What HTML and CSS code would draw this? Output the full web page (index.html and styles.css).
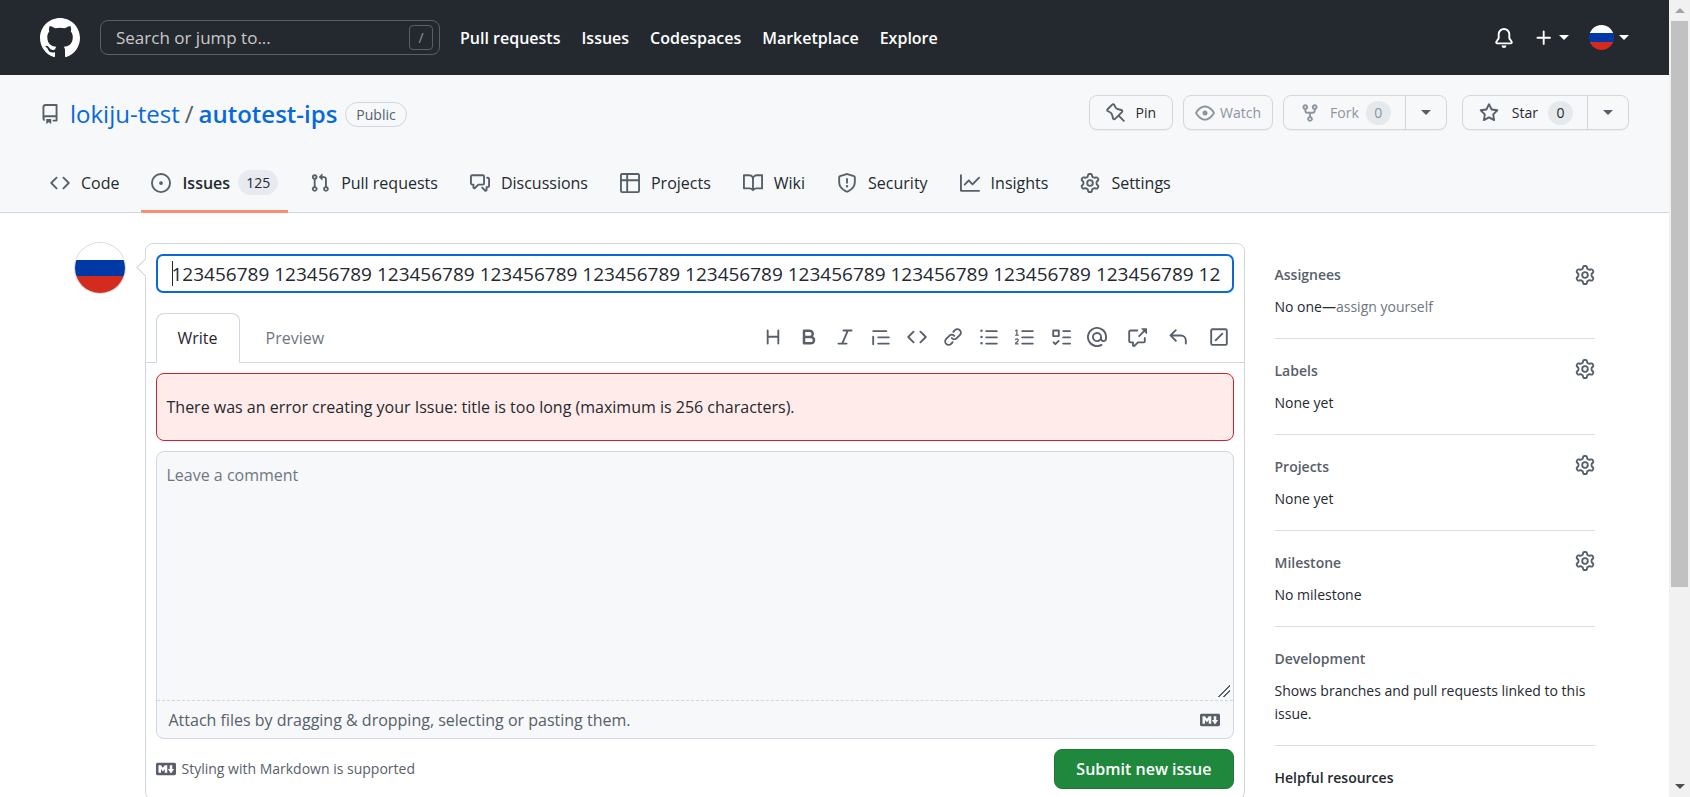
FILE: index.html
```html
<!DOCTYPE html>
<html lang="en">
<head>
<meta charset="utf-8">
<title>New Issue · lokiju-test/autotest-ips</title>
<link rel="stylesheet" href="styles.css">
</head>
<body>
<svg class="sprite" aria-hidden="true">
<symbol id="i-mark" viewBox="0 0 16 16"><path d="M8 0C3.58 0 0 3.58 0 8c0 3.54 2.29 6.53 5.47 7.59.4.07.55-.17.55-.38 0-.19-.01-.82-.01-1.49-2.01.37-2.53-.49-2.69-.94-.09-.23-.48-.94-.82-1.13-.28-.15-.68-.52-.01-.53.63-.01 1.08.58 1.23.82.72 1.21 1.87.87 2.33.66.07-.52.28-.87.51-1.07-1.78-.2-3.64-.89-3.64-3.95 0-.87.31-1.59.82-2.15-.08-.2-.36-1.02.08-2.12 0 0 .67-.21 2.2.82.64-.18 1.32-.27 2-.27.68 0 1.36.09 2 .27 1.53-1.04 2.2-.82 2.2-.82.44 1.1.16 1.92.08 2.12.51.56.82 1.27.82 2.15 0 3.07-1.87 3.75-3.65 3.95.29.25.54.73.54 1.48 0 1.07-.01 1.93-.01 2.2 0 .21.15.46.55.38A8.013 8.013 0 0016 8c0-4.42-3.58-8-8-8z"/></symbol>
<symbol id="i-repo" viewBox="0 0 16 16"><path d="M2 2.5A2.5 2.5 0 014.5 0h8.75a.75.75 0 01.75.75v12.5a.75.75 0 01-.75.75h-2.5a.75.75 0 110-1.5h1.75v-2h-8a1 1 0 00-.714 1.7.75.75 0 01-1.072 1.05A2.495 2.495 0 012 11.5v-9zm10.5-1V9h-8c-.356 0-.694.074-1 .208V2.5a1 1 0 011-1h8zM5 12.25v3.25a.25.25 0 00.4.2l1.45-1.087a.25.25 0 01.3 0L8.6 15.7a.25.25 0 00.4-.2v-3.25a.25.25 0 00-.25-.25h-3.5a.25.25 0 00-.25.25z"/></symbol>
<symbol id="i-code" viewBox="0 0 16 16"><path d="M4.72 3.22a.75.75 0 011.06 1.06L2.06 8l3.72 3.72a.75.75 0 11-1.06 1.06L.47 8.53a.75.75 0 010-1.06l4.25-4.25zm6.56 0a.75.75 0 10-1.06 1.06L13.94 8l-3.72 3.72a.75.75 0 101.06 1.06l4.25-4.25a.75.75 0 000-1.06l-4.25-4.25z"/></symbol>
<symbol id="i-issue" viewBox="0 0 16 16"><path d="M8 9.5a1.5 1.5 0 100-3 1.5 1.5 0 000 3z"/><path d="M8 0a8 8 0 100 16A8 8 0 008 0zM1.5 8a6.5 6.5 0 1113 0 6.5 6.5 0 01-13 0z"/></symbol>
<symbol id="i-pr" viewBox="0 0 16 16"><path d="M7.177 3.073L9.573.677A.25.25 0 0110 .854v4.792a.25.25 0 01-.427.177L7.177 3.427a.25.25 0 010-.354zM3.75 2.5a.75.75 0 100 1.5.75.75 0 000-1.5zm-2.25.75a2.25 2.25 0 113 2.122v5.256a2.251 2.251 0 11-1.5 0V5.372A2.25 2.25 0 011.5 3.25zM11 2.5h-1V4h1a1 1 0 011 1v5.628a2.251 2.251 0 101.5 0V5A2.5 2.5 0 0011 2.5zm1 10.25a.75.75 0 111.5 0 .75.75 0 01-1.5 0zM3.75 12a.75.75 0 100 1.5.75.75 0 000-1.5z"/></symbol>
<symbol id="i-disc" viewBox="0 0 16 16"><path d="M1.5 2.75a.25.25 0 01.25-.25h8.5a.25.25 0 01.25.25v5.5a.25.25 0 01-.25.25h-3.5a.75.75 0 00-.53.22L3.5 11.44V9.25a.75.75 0 00-.75-.75h-1a.25.25 0 01-.25-.25v-5.5zM1.75 1A1.75 1.75 0 000 2.75v5.5C0 9.216.784 10 1.75 10H2v1.543a1.457 1.457 0 002.487 1.03L7.061 10h3.189A1.75 1.75 0 0012 8.25v-5.5A1.75 1.75 0 0010.25 1h-8.5zM14.5 4.75a.25.25 0 00-.25-.25h-.5a.75.75 0 110-1.5h.5c.966 0 1.75.784 1.75 1.75v5.5A1.75 1.75 0 0114.25 12H14v1.543a1.457 1.457 0 01-2.487 1.03L9.22 12.28a.75.75 0 111.06-1.06l2.22 2.22v-2.19a.75.75 0 01.75-.75h1a.25.25 0 00.25-.25v-5.5z"/></symbol>
<symbol id="i-table" viewBox="0 0 16 16"><path d="M0 1.75C0 .784.784 0 1.75 0h12.5C15.216 0 16 .784 16 1.75v12.5A1.75 1.75 0 0114.25 16H1.75A1.75 1.75 0 010 14.25V1.75zM1.5 6.5v7.75c0 .138.112.25.25.25H5v-8H1.5zM5 5H1.5V1.75a.25.25 0 01.25-.25H5V5zm1.5 1.5v8h7.75a.25.25 0 00.25-.25V6.5h-8zm8-1.5h-8V1.5h7.75a.25.25 0 01.25.25V5z"/></symbol>
<symbol id="i-book" viewBox="0 0 16 16"><path d="M0 1.75A.75.75 0 01.75 1h4.253c1.227 0 2.317.59 3 1.501A3.744 3.744 0 0111.006 1h4.245a.75.75 0 01.75.75v10.5a.75.75 0 01-.75.75h-4.507a2.25 2.25 0 00-1.591.659l-.622.621a.75.75 0 01-1.06 0l-.622-.621A2.25 2.25 0 005.258 13H.75a.75.75 0 01-.75-.75V1.75zm8.755 3a2.25 2.25 0 012.25-2.25H14.5v9h-3.757c-.71 0-1.4.201-1.992.572l.004-7.322zm-1.504 7.324l.004-5.073-.002-2.253A2.25 2.25 0 005.003 2.5H1.5v9h3.757a3.75 3.75 0 011.994.574z"/></symbol>
<symbol id="i-shield" viewBox="0 0 16 16"><path d="M7.467.133a1.75 1.75 0 011.066 0l5.25 1.68A1.75 1.75 0 0115 3.48V7c0 1.566-.32 3.182-1.303 4.682-.983 1.498-2.585 2.813-5.032 3.855a1.7 1.7 0 01-1.33 0c-2.447-1.042-4.049-2.357-5.032-3.855C1.32 10.182 1 8.566 1 7V3.48a1.75 1.75 0 011.217-1.667l5.25-1.68zm.61 1.429a.25.25 0 00-.153 0l-5.25 1.68a.25.25 0 00-.174.238V7c0 1.358.275 2.666 1.057 3.86.784 1.194 2.121 2.34 4.366 3.297a.2.2 0 00.154 0c2.245-.956 3.582-2.104 4.366-3.298C13.225 9.666 13.5 8.36 13.5 7V3.48a.25.25 0 00-.174-.237l-5.25-1.68zM9 10.5a1 1 0 11-2 0 1 1 0 012 0zm-.25-5.75a.75.75 0 10-1.5 0v3a.75.75 0 001.5 0v-3z"/></symbol>
<symbol id="i-graph" viewBox="0 0 16 16"><path d="M1.5 1.75a.75.75 0 00-1.5 0v12.5c0 .414.336.75.75.75h14.5a.75.75 0 000-1.5H1.5V1.75zm14.28 2.53a.75.75 0 00-1.06-1.06L10 7.94 7.53 5.47a.75.75 0 00-1.06 0L3.22 8.72a.75.75 0 001.06 1.06L7 7.06l2.47 2.47a.75.75 0 001.06 0l5.25-5.25z"/></symbol>
<symbol id="i-gear" viewBox="0 0 16 16"><path d="M8 0a8.2 8.2 0 0 1 .701.031C9.444.095 9.99.645 10.16 1.29l.288 1.107c.018.066.079.158.212.224.231.114.454.243.668.386.123.082.233.09.299.071l1.103-.303c.644-.176 1.392.021 1.82.63.27.385.506.792.704 1.218.315.675.111 1.422-.364 1.891l-.814.806c-.049.048-.098.147-.088.294.016.257.016.515 0 .772-.01.147.038.246.088.294l.814.806c.475.469.679 1.216.364 1.891a7.977 7.977 0 0 1-.704 1.217c-.428.61-1.176.807-1.82.63l-1.102-.302c-.067-.019-.177-.011-.3.071a5.909 5.909 0 0 1-.668.386c-.133.066-.194.158-.211.224l-.29 1.106c-.168.646-.715 1.196-1.458 1.26a8.006 8.006 0 0 1-1.402 0c-.743-.064-1.289-.614-1.458-1.26l-.289-1.106c-.018-.066-.079-.158-.212-.224a5.738 5.738 0 0 1-.668-.386c-.123-.082-.233-.09-.299-.071l-1.103.303c-.644.176-1.392-.021-1.82-.63a8.12 8.12 0 0 1-.704-1.218c-.315-.675-.111-1.422.363-1.891l.815-.806c.05-.048.098-.147.088-.294a6.214 6.214 0 0 1 0-.772c.01-.147-.038-.246-.088-.294l-.815-.806C.635 6.045.431 5.298.746 4.623a7.92 7.92 0 0 1 .704-1.217c.428-.61 1.176-.807 1.82-.63l1.102.302c.067.019.177.011.3-.071.214-.143.437-.272.668-.386.133-.066.194-.158.211-.224l.29-1.106C6.009.645 6.556.095 7.299.03 7.53.01 7.764 0 8 0Zm-.571 1.525c-.036.003-.108.036-.137.146l-.289 1.105c-.147.561-.549.967-.998 1.189-.173.086-.34.183-.5.29-.417.278-.97.423-1.529.27l-1.103-.303c-.109-.03-.175.016-.195.045-.22.312-.412.644-.573.99-.014.031-.021.11.059.19l.815.806c.411.406.562.957.53 1.456a4.709 4.709 0 0 0 0 .582c.032.499-.119 1.05-.53 1.456l-.815.806c-.081.08-.073.159-.059.19.162.346.353.677.573.989.02.03.085.076.195.046l1.102-.303c.56-.153 1.113-.008 1.53.27.161.107.328.204.501.29.447.222.85.629.997 1.189l.289 1.105c.029.109.101.143.137.146a6.6 6.6 0 0 0 1.142 0c.036-.003.108-.036.137-.146l.289-1.105c.147-.561.549-.967.998-1.189.173-.086.34-.183.5-.29.417-.278.97-.423 1.529-.27l1.103.303c.109.029.175-.016.195-.045.22-.313.411-.644.573-.99.014-.031.021-.11-.059-.19l-.815-.806c-.411-.406-.562-.957-.53-1.456a4.709 4.709 0 0 0 0-.582c-.032-.499.119-1.05.53-1.456l.815-.806c.081-.08.073-.159.059-.19a6.464 6.464 0 0 0-.573-.989c-.02-.03-.085-.076-.195-.046l-1.102.303c-.56.153-1.113.008-1.53-.27a4.44 4.44 0 0 0-.501-.29c-.447-.222-.85-.629-.997-1.189l-.289-1.105c-.029-.11-.101-.143-.137-.146a6.6 6.6 0 0 0-1.142 0ZM11 8a3 3 0 1 1-6 0 3 3 0 0 1 6 0ZM9.5 8a1.5 1.5 0 1 0-3.001.001A1.5 1.5 0 0 0 9.5 8Z"/></symbol>
<symbol id="i-bell" viewBox="0 0 16 16"><path d="M8 16a2 2 0 001.985-1.75c.017-.137-.097-.25-.235-.25h-3.5c-.138 0-.252.113-.235.25A2 2 0 008 16z"/><path d="M8 1.5A3.5 3.5 0 004.5 5v2.947c0 .346-.102.683-.294.97l-1.703 2.556a.018.018 0 00-.003.01l.001.006c0 .002.002.004.004.006a.017.017 0 00.006.004l.007.001h10.964l.007-.001a.016.016 0 00.006-.004.016.016 0 00.004-.006l.001-.007a.017.017 0 00-.003-.01l-1.703-2.554a1.75 1.75 0 01-.294-.97V5A3.5 3.5 0 008 1.5zM3 5a5 5 0 0110 0v2.947c0 .05.015.098.042.139l1.703 2.555A1.518 1.518 0 0113.482 13H2.518a1.518 1.518 0 01-1.263-2.36l1.703-2.554A.25.25 0 003 7.947V5z"/></symbol>
<symbol id="i-plus" viewBox="0 0 16 16"><path d="M7.75 2a.75.75 0 01.75.75V7h4.25a.75.75 0 110 1.5H8.5v4.25a.75.75 0 11-1.5 0V8.5H2.75a.75.75 0 010-1.5H7V2.75A.75.75 0 017.75 2z"/></symbol>
<symbol id="i-pin" viewBox="0 0 16 16"><path d="M4.456.734a1.75 1.75 0 012.826.504l.613 1.327a3.081 3.081 0 002.084 1.707l2.454.584c1.332.317 1.8 1.972.832 2.94L11.06 10l3.72 3.72a.75.75 0 11-1.061 1.06L10 11.06l-2.204 2.205c-.968.968-2.623.5-2.94-.832l-.584-2.454a3.081 3.081 0 00-1.707-2.084l-1.327-.613a1.75 1.75 0 01-.504-2.826L4.456.734zM5.92 1.866a.25.25 0 00-.404-.072L1.794 5.516a.25.25 0 00.072.404l1.328.613A4.582 4.582 0 015.73 9.63l.584 2.454a.25.25 0 00.42.12l5.47-5.47a.25.25 0 00-.12-.42L9.63 5.73a4.581 4.581 0 01-3.098-2.537L5.92 1.866z"/></symbol>
<symbol id="i-eye" viewBox="0 0 16 16"><path d="M1.679 7.932c.412-.621 1.242-1.75 2.366-2.717C5.175 4.242 6.527 3.5 8 3.5c1.473 0 2.824.742 3.955 1.715 1.124.967 1.954 2.096 2.366 2.717a.119.119 0 010 .136c-.412.621-1.242 1.75-2.366 2.717C10.825 11.758 9.473 12.5 8 12.5c-1.473 0-2.824-.742-3.955-1.715C2.92 9.818 2.09 8.69 1.679 8.068a.119.119 0 010-.136zM8 2c-1.981 0-3.67.992-4.933 2.078C1.797 5.169.88 6.423.43 7.1a1.619 1.619 0 000 1.798c.45.678 1.367 1.932 2.637 3.024C4.329 13.008 6.019 14 8 14c1.981 0 3.67-.992 4.933-2.078 1.27-1.091 2.187-2.345 2.637-3.023a1.619 1.619 0 000-1.798c-.45-.678-1.367-1.932-2.637-3.023C11.671 2.992 9.981 2 8 2zm0 8a2 2 0 100-4 2 2 0 000 4z"/></symbol>
<symbol id="i-fork" viewBox="0 0 16 16"><path d="M5 3.25a.75.75 0 11-1.5 0 .75.75 0 011.5 0zm0 2.122a2.25 2.25 0 10-1.5 0v.878A2.25 2.25 0 005.75 8.5h1.5v2.128a2.251 2.251 0 101.5 0V8.5h1.5a2.25 2.25 0 002.25-2.25v-.878a2.25 2.25 0 10-1.5 0v.878a.75.75 0 01-.75.75h-4.5A.75.75 0 015 6.25v-.878zm3.75 7.378a.75.75 0 11-1.5 0 .75.75 0 011.5 0zm3-8.75a.75.75 0 100-1.5.75.75 0 000 1.5z"/></symbol>
<symbol id="i-star" viewBox="0 0 16 16"><path d="M8 .25a.75.75 0 01.673.418l1.882 3.815 4.21.612a.75.75 0 01.416 1.279l-3.046 2.97.719 4.192a.75.75 0 01-1.088.791L8 12.347l-3.766 1.98a.75.75 0 01-1.088-.79l.72-4.194L.818 6.374a.75.75 0 01.416-1.28l4.21-.611L7.327.668A.75.75 0 018 .25zm0 2.445L6.615 5.5a.75.75 0 01-.564.41l-3.097.45 2.24 2.184a.75.75 0 01.216.664l-.528 3.084 2.769-1.456a.75.75 0 01.698 0l2.77 1.456-.53-3.084a.75.75 0 01.216-.664l2.24-2.183-3.096-.45a.75.75 0 01-.564-.41L8 2.694v.001z"/></symbol>
<symbol id="i-heading" viewBox="0 0 16 16"><path d="M3.75 2a.75.75 0 01.75.75V7h7V2.75a.75.75 0 011.5 0v10.5a.75.75 0 01-1.5 0V8.5h-7v4.75a.75.75 0 01-1.5 0V2.75A.75.75 0 013.75 2z"/></symbol>
<symbol id="i-bold" viewBox="0 0 16 16"><path d="M4 2a1 1 0 00-1 1v10a1 1 0 001 1h5.5a3.5 3.5 0 001.852-6.47A3.5 3.5 0 008.5 2H4zm4.5 5a1.5 1.5 0 100-3H5v3h3.5zM5 9v3h4.5a1.5 1.5 0 000-3H5z"/></symbol>
<symbol id="i-italic" viewBox="0 0 16 16"><path d="M6 2.75A.75.75 0 016.75 2h6.5a.75.75 0 010 1.5h-2.505l-3.858 9H9.25a.75.75 0 010 1.5h-6.5a.75.75 0 010-1.5h2.505l3.858-9H6.75A.75.75 0 016 2.75z"/></symbol>
<symbol id="i-quote" viewBox="0 0 16 16"><path d="M1.75 2.5a.75.75 0 000 1.5h10.5a.75.75 0 000-1.5H1.75zm4 5a.75.75 0 000 1.5h8.5a.75.75 0 000-1.5h-8.5zm0 5a.75.75 0 000 1.5h8.5a.75.75 0 000-1.5h-8.5zM2.5 7.75a.75.75 0 00-1.5 0v6a.75.75 0 001.5 0v-6z"/></symbol>
<symbol id="i-link" viewBox="0 0 16 16"><path d="M7.775 3.275a.75.75 0 001.06 1.06l1.25-1.25a2 2 0 112.83 2.83l-2.5 2.5a2 2 0 01-2.83 0 .75.75 0 00-1.06 1.06 3.5 3.5 0 004.95 0l2.5-2.5a3.5 3.5 0 00-4.95-4.95l-1.25 1.25zm-4.69 9.64a2 2 0 010-2.83l2.5-2.5a2 2 0 012.83 0 .75.75 0 001.06-1.06 3.5 3.5 0 00-4.95 0l-2.5 2.5a3.5 3.5 0 004.95 4.95l1.25-1.25a.75.75 0 00-1.06-1.06l-1.25 1.25a2 2 0 01-2.83 0z"/></symbol>
<symbol id="i-ul" viewBox="0 0 16 16"><path d="M2 4a1 1 0 100-2 1 1 0 000 2zm3.75-1.5a.75.75 0 000 1.5h8.5a.75.75 0 000-1.5h-8.5zm0 5a.75.75 0 000 1.5h8.5a.75.75 0 000-1.5h-8.5zm0 5a.75.75 0 000 1.5h8.5a.75.75 0 000-1.5h-8.5zM3 8a1 1 0 11-2 0 1 1 0 012 0zm-1 6a1 1 0 100-2 1 1 0 000 2z"/></symbol>
<symbol id="i-ol" viewBox="0 0 16 16"><path d="M2.003 2.5a.5.5 0 00-.723-.447l-1.003.5a.5.5 0 00.446.895l.28-.14V6H.5a.5.5 0 000 1h2.006a.5.5 0 100-1h-.503V2.5zM5 3.25a.75.75 0 01.75-.75h8.5a.75.75 0 010 1.5h-8.5A.75.75 0 015 3.25zm0 5a.75.75 0 01.75-.75h8.5a.75.75 0 010 1.5h-8.5A.75.75 0 015 8.25zm0 5a.75.75 0 01.75-.75h8.5a.75.75 0 010 1.5h-8.5a.75.75 0 01-.75-.75zM.924 10.32l.003-.004a.851.851 0 01.144-.153A.66.66 0 011.5 10c.195 0 .306.068.374.146a.57.57 0 01.128.376c0 .453-.269.682-.8 1.078l-.035.025C.692 11.98 0 12.495 0 13.5a.5.5 0 00.5.5h2.003a.5.5 0 000-1H1.146c.132-.197.351-.372.654-.597l.047-.035c.47-.35 1.156-.858 1.156-1.845 0-.365-.118-.744-.377-1.038-.268-.303-.658-.484-1.126-.484-.48 0-.84.202-1.068.392a1.858 1.858 0 00-.348.384l-.007.011a.5.5 0 00.847.531z"/></symbol>
<symbol id="i-task" viewBox="0 0 16 16"><path d="M2 2h4a1 1 0 011 1v4a1 1 0 01-1 1H2a1 1 0 01-1-1V3a1 1 0 011-1zm4.655 8.595a.75.75 0 010 1.06L4.03 14.28a.75.75 0 01-1.06 0l-1.5-1.5a.75.75 0 011.06-1.06l.97.97 2.095-2.095a.75.75 0 011.06 0zM9.75 2.5h5.5a.75.75 0 010 1.5h-5.5a.75.75 0 010-1.5zm0 5h5.5a.75.75 0 010 1.5h-5.5a.75.75 0 010-1.5zm0 5h5.5a.75.75 0 010 1.5h-5.5a.75.75 0 010-1.5zm-7.25-9v3h3v-3z"/></symbol>
<symbol id="i-at" viewBox="0 0 16 16"><path d="M4.75 2.37a6.5 6.5 0 006.5 11.26.75.75 0 01.75 1.298 8 8 0 113.994-7.273.754.754 0 01.006.095v1.5a2.75 2.75 0 01-5.072 1.475A4 4 0 1112 8v1.25a1.25 1.25 0 002.5 0V7.867a6.5 6.5 0 00-9.75-5.496V2.37zM10.5 8a2.5 2.5 0 10-5 0 2.5 2.5 0 005 0z"/></symbol>
<symbol id="i-cross" viewBox="0 0 16 16"><path d="M16 1.25v4.146a.25.25 0 01-.427.177L14.03 4.03l-3.75 3.75a.75.75 0 11-1.06-1.06l3.75-3.75-1.543-1.543A.25.25 0 0111.604 1h4.146a.25.25 0 01.25.25zM2.75 3.5a.25.25 0 00-.25.25v7.5c0 .138.112.25.25.25h2a.75.75 0 01.75.75v2.19l2.72-2.72a.75.75 0 01.53-.22h4.5a.25.25 0 00.25-.25v-2.5a.75.75 0 111.5 0v2.5A1.75 1.75 0 0113.25 13H9.06l-2.573 2.573A1.457 1.457 0 014 14.543V13H2.75A1.75 1.75 0 011 11.25v-7.5C1 2.784 1.784 2 2.75 2h5.5a.75.75 0 010 1.5h-5.5z"/></symbol>
<symbol id="i-reply" viewBox="0 0 16 16"><path d="M6.78 1.97a.75.75 0 010 1.06L3.81 6h6.44A4.75 4.75 0 0115 10.75v2.5a.75.75 0 01-1.5 0v-2.5a3.25 3.25 0 00-3.25-3.25H3.81l2.97 2.97a.75.75 0 11-1.06 1.06L1.47 7.28a.75.75 0 010-1.06l4.25-4.25a.75.75 0 011.06 0z"/></symbol>
<symbol id="i-slash" viewBox="0 0 16 16"><g fill="none" stroke="currentColor" stroke-width="1.5" stroke-linecap="round"><rect x="1.75" y="1.75" width="12.5" height="12.5" rx="1"/><path d="M5.3 10.7l5.4-5.4"/></g></symbol>
<symbol id="i-md" viewBox="0 0 16 16"><path d="M14.85 3H1.15C.52 3 0 3.52 0 4.15v7.69C0 12.48.52 13 1.15 13h13.69c.64 0 1.15-.52 1.15-1.15v-7.7C16 3.52 15.48 3 14.85 3zM9 11H7V8L5.5 9.92 4 8v3H2V5h2l1.5 2L7 5h2v6zm2.99.5L9.5 8H11V5h2v3h1.5l-2.51 3.5z"/></symbol>
</svg>
<div class="window">
<div class="page">
<header class="topbar">
  <a class="mark" href="#" aria-label="Homepage"><svg class="mark-icon"><use href="#i-mark"/></svg></a>
  <div class="search">
    <input class="search-input" type="text" placeholder="Search or jump to..." aria-label="Search or jump to">
    <kbd class="search-key">/</kbd>
  </div>
  <nav class="topnav">
    <a href="#">Pull requests</a><a href="#">Issues</a><a href="#">Codespaces</a><a href="#">Marketplace</a><a href="#">Explore</a>
  </nav>
  <div class="top-actions">
    <a class="bell" href="#" aria-label="Notifications"><svg class="icon"><use href="#i-bell"/></svg></a>
    <button class="top-menu" type="button" aria-label="Create new"><svg class="icon"><use href="#i-plus"/></svg><span class="caret"></span></button>
    <button class="top-menu account" type="button" aria-label="Account menu"><span class="flag flag-small"></span><span class="caret"></span></button>
  </div>
</header>

<div class="repo-head">
  <div class="repo-row">
    <div class="repo-title">
      <svg class="icon"><use href="#i-repo"/></svg>
      <a class="owner" href="#">lokiju-test</a><span class="sep">/</span><a class="name" href="#">autotest-ips</a>
      <span class="visibility">Public</span>
    </div>
    <div class="repo-actions">
      <button class="btn btn-pin" type="button"><svg class="icon"><use href="#i-pin"/></svg>Pin</button>
      <button class="btn btn-watch" type="button" disabled><svg class="icon"><use href="#i-eye"/></svg>Watch</button>
      <div class="split">
        <button class="btn btn-main" type="button" disabled><svg class="icon"><use href="#i-fork"/></svg>Fork<span class="count">0</span></button><button class="btn btn-drop" type="button" aria-label="Fork options"><span class="caret"></span></button>
      </div>
      <div class="split split-star">
        <button class="btn btn-main" type="button"><svg class="icon"><use href="#i-star"/></svg>Star<span class="count">0</span></button><button class="btn btn-drop" type="button" aria-label="Star options"><span class="caret"></span></button>
      </div>
    </div>
  </div>
  <nav class="tabs">
    <a class="tab" href="#"><svg class="icon"><use href="#i-code"/></svg>Code</a>
    <a class="tab tab-current" href="#"><svg class="icon"><use href="#i-issue"/></svg>Issues<span class="tab-count">125</span></a>
    <a class="tab" href="#"><svg class="icon"><use href="#i-pr"/></svg>Pull requests</a>
    <a class="tab" href="#"><svg class="icon"><use href="#i-disc"/></svg>Discussions</a>
    <a class="tab" href="#"><svg class="icon"><use href="#i-table"/></svg>Projects</a>
    <a class="tab" href="#"><svg class="icon"><use href="#i-book"/></svg>Wiki</a>
    <a class="tab" href="#"><svg class="icon"><use href="#i-shield"/></svg>Security</a>
    <a class="tab" href="#"><svg class="icon"><use href="#i-graph"/></svg>Insights</a>
    <a class="tab" href="#"><svg class="icon"><use href="#i-gear"/></svg>Settings</a>
  </nav>
</div>

<main class="main">
  <span class="flag flag-large"></span>
  <form class="composer">
    <div class="title-field">
      <input class="title-input" type="text" aria-label="Title" value="123456789 123456789 123456789 123456789 123456789 123456789 123456789 123456789 123456789 123456789 123456789 123456789 123456789 123456789 123456789 123456789 123456789 123456789 123456789 123456789 123456789 123456789 123456789 123456789 123456789 123456789">
    </div>
    <div class="editor-head">
      <div class="editor-tabs">
        <button class="editor-tab editor-tab-current" type="button">Write</button>
        <button class="editor-tab" type="button">Preview</button>
      </div>
      <div class="toolbar">
        <div class="tools">
          <button type="button" aria-label="Heading"><svg class="icon"><use href="#i-heading"/></svg></button>
          <button type="button" aria-label="Bold"><svg class="icon"><use href="#i-bold"/></svg></button>
          <button type="button" aria-label="Italic"><svg class="icon"><use href="#i-italic"/></svg></button>
          <button type="button" aria-label="Quote"><svg class="icon"><use href="#i-quote"/></svg></button>
          <button type="button" aria-label="Code"><svg class="icon"><use href="#i-code"/></svg></button>
          <button type="button" aria-label="Link"><svg class="icon"><use href="#i-link"/></svg></button>
          <button type="button" aria-label="Bulleted list"><svg class="icon"><use href="#i-ul"/></svg></button>
          <button type="button" aria-label="Numbered list"><svg class="icon"><use href="#i-ol"/></svg></button>
          <button type="button" aria-label="Task list"><svg class="icon"><use href="#i-task"/></svg></button>
          <button type="button" aria-label="Mention"><svg class="icon"><use href="#i-at"/></svg></button>
        </div>
        <div class="tools tools-wide">
          <button type="button" aria-label="Reference"><svg class="icon"><use href="#i-cross"/></svg></button>
          <button type="button" aria-label="Saved reply"><svg class="icon"><use href="#i-reply"/></svg></button>
          <button type="button" aria-label="Slash commands"><svg class="icon"><use href="#i-slash"/></svg></button>
        </div>
      </div>
    </div>
    <div class="editor-body">
      <p class="flash" role="alert">There was an error creating your Issue: title is too long (maximum is 256 characters).</p>
      <div class="comment">
        <textarea class="comment-text" placeholder="Leave a comment" aria-label="Comment body"></textarea>
        <div class="attach"><label for="files">Attach files by dragging &amp; dropping, selecting or pasting them.</label><input id="files" class="file-input" type="file" hidden><svg class="icon"><use href="#i-md"/></svg></div>
      </div>
      <div class="form-foot">
        <a class="md-note" href="#"><svg class="icon"><use href="#i-md"/></svg>Styling with Markdown is supported</a>
        <button class="submit" type="submit">Submit new issue</button>
      </div>
    </div>
  </form>
  <aside class="sidebar">
    <section class="side"><div class="side-head"><h2>Assignees</h2><button type="button" aria-label="Edit assignees"><svg class="icon"><use href="#i-gear"/></svg></button></div><p>No one—<a href="#">assign yourself</a></p></section>
    <section class="side"><div class="side-head"><h2>Labels</h2><button type="button" aria-label="Edit labels"><svg class="icon"><use href="#i-gear"/></svg></button></div><p>None yet</p></section>
    <section class="side"><div class="side-head"><h2>Projects</h2><button type="button" aria-label="Edit projects"><svg class="icon"><use href="#i-gear"/></svg></button></div><p>None yet</p></section>
    <section class="side"><div class="side-head"><h2>Milestone</h2><button type="button" aria-label="Edit milestone"><svg class="icon"><use href="#i-gear"/></svg></button></div><p>No milestone</p></section>
    <section class="side"><div class="side-head"><h2>Development</h2></div><p>Shows branches and pull requests linked to this issue.</p></section>
    <section class="side"><div class="side-head"><h2 class="strong">Helpful resources</h2></div></section>
  </aside>
</main>
</div>
<div class="scrollbar" aria-hidden="true">
  <span class="arrow arrow-up"></span>
  <span class="track"><span class="thumb"></span></span>
  <span class="arrow arrow-down"></span>
</div>
</div>
</body>
</html>
```
FILE: styles.css
```css
* { box-sizing: border-box; }
body { margin: 0; font-family: "Open Sans", "Noto Sans", sans-serif; font-size: 16px; line-height: 24px; color: #24292f; background: #fff; }
a { color: inherit; text-decoration: none; }
button, input, textarea { font: inherit; color: inherit; }
button { margin: 0; padding: 0; border: 0; background: none; cursor: pointer; }
h2, p { margin: 0; }
path { fill-rule: evenodd; }
.sprite { display: none; }
.icon { width: 20px; height: 20px; flex: none; fill: currentColor; }
.caret { flex: none; border: 5px solid transparent; border-top-color: currentColor; border-bottom: 0; }

.window { display: flex; height: 100vh; overflow: hidden; }
.page { flex: 1; min-width: 0; overflow: hidden; }

/* Top bar */
.topbar { display: flex; align-items: center; height: 75px; padding: 0 40px; gap: 20px; background: #24292f; color: #fff; }
.mark { display: flex; }
.mark-icon { width: 40px; height: 40px; fill: #fff; }
.search { display: flex; align-items: center; width: 340px; height: 35px; padding: 0 6px 0 15px; border: 1px solid #57606a; border-radius: 8px; }
.search-input { flex: 1; min-width: 0; padding: 0; border: 0; outline: 0; background: none; font-size: 17px; }
.search-input::placeholder { color: #c8c9cb; opacity: 1; }
.search-key { width: 24px; height: 25px; border: 1px solid #57606a; border-radius: 4px; color: #8c959f; font: 14px/23px "Open Sans", sans-serif; text-align: center; }
.topnav { display: flex; gap: 21px; font-size: 16px; font-weight: 600; }
.top-actions { display: flex; align-items: center; margin-left: auto; }
.bell { display: flex; margin-right: 20px; }
.top-menu { display: flex; align-items: center; gap: 5px; }
.account { margin-left: 20px; }

/* Avatar */
.flag { display: block; flex: none; border-radius: 50%; background: linear-gradient(#fff 0 33%, #0039a6 33% 67%, #d52b1e 67%); }
.flag-small { width: 25px; height: 25px; }
.flag-large { width: 50px; height: 50px; box-shadow: 0 0 0 1px #d8dbde; }

/* Repository header */
.repo-head { padding-top: 20px; background: #f6f8fa; border-bottom: 1px solid #d0d7de; }
.repo-row { display: flex; align-items: flex-start; justify-content: space-between; padding: 0 40px; height: 58px; }
.repo-title { display: flex; align-items: center; height: 38px; color: #57606a; font-size: 24px; line-height: 38px; }
.owner { margin-left: 10px; color: #0969da; }
.sep { margin: 0 5px; }
.name { color: #0969da; font-weight: 600; }
.visibility { height: 25px; margin-left: 8px; padding: 0 10px; border: 1px solid #d0d7de; border-radius: 13px; font-size: 14px; line-height: 23px; font-weight: 500; }
.repo-actions { display: flex; gap: 10px; }
.btn { display: flex; align-items: center; height: 35px; padding: 0 16px; border: 1px solid #d5d8da; border-radius: 8px; background: #f6f8fa; box-shadow: 0 1px 0 rgba(27, 31, 36, .04); font-size: 14px; font-weight: 500; color: #24292f; }
.btn .icon { color: #57606a; }
.btn:disabled, .btn:disabled .icon { color: #8c959f; }
.btn-pin { gap: 10px; }
.btn-watch { gap: 5px; padding: 0 11px; }
.split { display: flex; }
.split-star { margin-left: 5px; }
.btn-main { gap: 10px; padding-right: 14px; border-radius: 8px 0 0 8px; }
.split-star .btn-main { gap: 13px; }
.btn-drop { width: 42px; margin-left: -1px; padding: 0; justify-content: center; border-radius: 0 8px 8px 0; color: #57606a; }
.count { min-width: 25px; height: 24px; margin-left: -3px; border-radius: 12px; background: #e6e9eb; line-height: 24px; text-align: center; }

.tabs { display: flex; gap: 12px; padding: 0 40px; }
.tab { display: flex; align-items: center; gap: 11px; height: 60px; padding: 2px 10px 0; margin-bottom: -1px; border-bottom: 3px solid transparent; }
.tab .icon { color: #57606a; }
.tab-current { border-bottom-color: #fd8c73; border-radius: 1px; font-weight: 600; }
.tab-count { height: 25px; margin-left: -3px; padding: 0 8px; border-radius: 13px; background: #e7eaef; font-size: 14px; font-weight: 500; line-height: 25px; }

/* Main columns */
.main { display: flex; align-items: flex-start; max-width: 1600px; margin: 0 auto; padding: 30px 40px; }
.composer { position: relative; flex: 1; min-width: 0; margin-left: 20px; border: 1px solid #d0d7de; border-radius: 8px; }
.composer::before { content: ""; position: absolute; left: -7px; top: 17px; width: 12px; height: 12px; border: solid #d0d7de; border-width: 0 0 1px 1px; background: #fff; transform: rotate(45deg); }
.title-field { position: relative; padding: 10px 10px 20px; }
.title-field::after { content: ""; position: absolute; left: 26px; top: 17px; width: 1px; height: 25px; background: #24292f; }
.title-input { display: block; width: 100%; height: 39px; padding: 0 11px 0 14px; border: 2px solid #0969da; border-radius: 7px; outline: 0; background: #fff; font-size: 19px; }
.editor-head { display: flex; justify-content: space-between; padding: 0 4px 0 10px; border-bottom: 1px solid #d0d7de; }
.editor-tabs { display: flex; }
.editor-tab { height: 50px; margin-bottom: -1px; padding: 0 20px; border: 1px solid transparent; color: #6e7781; margin-right: 5px; }
.editor-tab-current { padding: 0 21px; border-color: #d0d7de #d0d7de #fff; border-radius: 8px 8px 0 0; background: #fff; color: #24292f; }
.toolbar { display: flex; gap: 2px; color: #57606a; }
.tools { display: flex; }
.tools button { display: flex; align-items: center; justify-content: center; width: 36px; height: 48px; }
.tools-wide button { width: 41px; }
.editor-body { padding: 10px; }
.flash { padding: 21px 10px; border: 1px solid #cf222e; border-radius: 8px; background: #ffebe9; font-size: 16px; }
.comment { margin: 10px 0; border: 1px solid #d0d7de; border-radius: 8px; background: #f6f8fa; overflow: hidden; }
.comment-text { display: block; width: 100%; height: 248px; padding: 11px 10px; border: 0; outline: 0; background: none; resize: vertical; }
.comment-text::placeholder { color: #6e7781; opacity: 1; }
.comment-text::-webkit-resizer { background: linear-gradient(135deg, transparent 0 49%, #57606a 49% 57%, transparent 57% 70%, #57606a 70% 78%, transparent 78%) 0 0 / 12px 12px no-repeat; }
.attach { display: flex; align-items: center; justify-content: space-between; height: 38px; padding: 0 13px 0 12px; border-top: 1px dashed #d0d7de; color: #57606a; font-size: 16px; }
.form-foot { display: flex; align-items: center; justify-content: space-between; }
.md-note { display: flex; align-items: center; gap: 6px; color: #57606a; font-size: 14px; }
.submit { height: 40px; padding: 0 21px; border: 1px solid #1f7a39; border-radius: 8px; background: #1f883d; color: #fff; font-size: 16px; font-weight: 600; }

/* Sidebar */
.sidebar { width: 320px; margin-left: 30px; font-size: 14px; line-height: 23px; }
.side { padding: 20px 0; border-bottom: 1px solid #d8dee4; }
.side:last-child { border-bottom: 0; }
.side-head { display: flex; justify-content: space-between; align-items: flex-start; height: 23px; margin-bottom: 9px; color: #57606a; }
.side:first-child .side-head { align-items: center; }
.side-head h2 { font-size: 14px; font-weight: 600; line-height: 23px; }
.side-head .strong { color: #24292f; }
.side-head button { display: flex; }
.side a { color: #6e7781; }

/* Scrollbar */
.scrollbar { display: flex; flex-direction: column; width: 21px; background: #f1f1f1; }
.arrow { height: 21px; display: flex; align-items: center; justify-content: center; }
.arrow::before { content: ""; border: 5px solid transparent; }
.arrow-up::before { border-bottom-color: #a3a3a3; border-top: 0; }
.arrow-down::before { border-top-color: #505050; border-bottom: 0; }
.track { flex: 1; padding: 0 2px; }
.thumb { display: block; height: 75%; background: #c1c1c1; }
```
